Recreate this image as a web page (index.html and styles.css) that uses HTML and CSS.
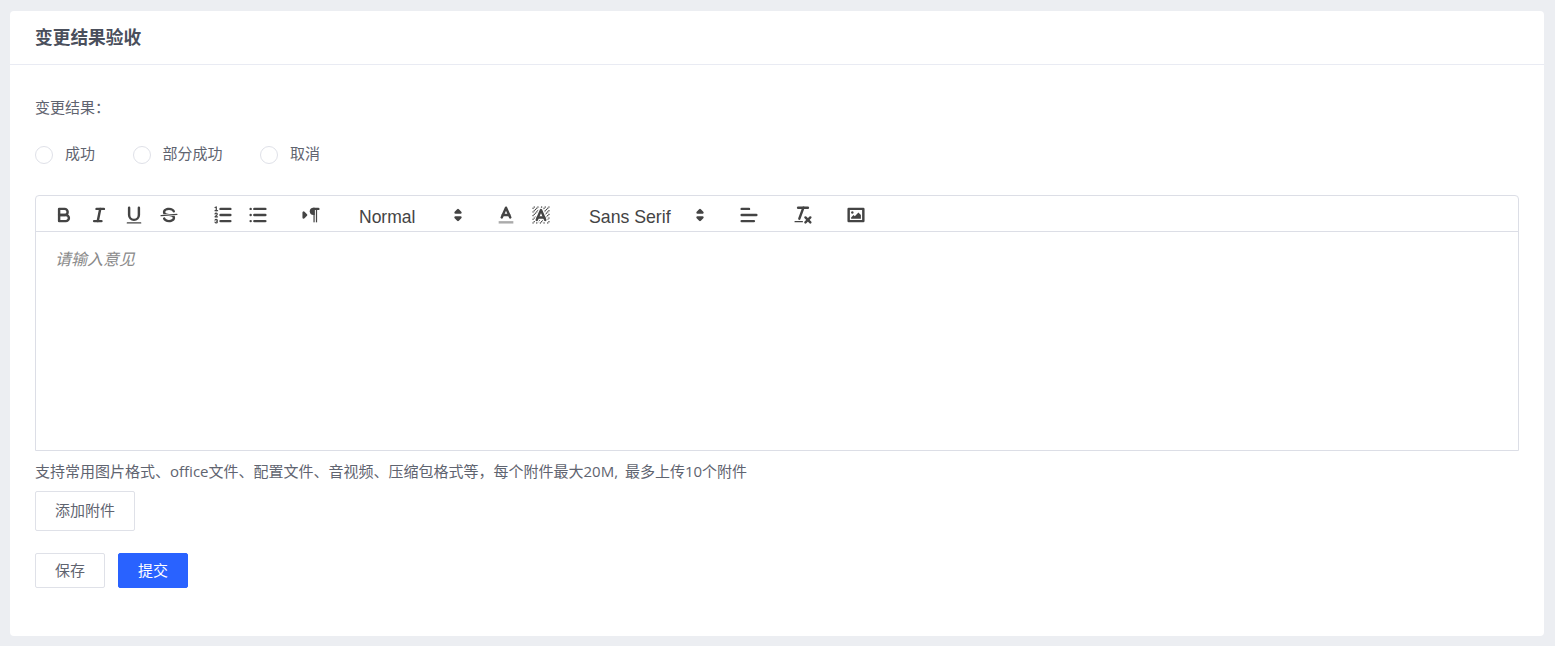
FILE: index.html
```html
<!DOCTYPE html>
<html lang="zh-CN">
<head>
<meta charset="utf-8">
<title>变更结果验收</title>
<link rel="stylesheet" href="styles.css">
</head>
<body>
<main class="card">
  <header class="card-head"><h1 class="card-title">变更结果验收</h1></header>
  <div class="card-body">
    <div class="field-label">变更结果&#xFF1A;</div>
    <div class="radios">
      <label class="radio"><span class="radio-dot"></span><span class="radio-text">成功</span></label>
      <label class="radio"><span class="radio-dot"></span><span class="radio-text">部分成功</span></label>
      <label class="radio"><span class="radio-dot"></span><span class="radio-text">取消</span></label>
    </div>
    <div class="editor">
      <div class="toolbar">
        <span class="group">
          <span class="tb"><svg viewBox="0 0 18 18"><path class="st" d="M5,4H9.5A2.5,2.5,0,0,1,12,6.5v0A2.5,2.5,0,0,1,9.5,9H5A0,0,0,0,1,5,9V4A0,0,0,0,1,5,4Z"/><path class="st" d="M5,9h5.5A2.5,2.5,0,0,1,13,11.5v0A2.5,2.5,0,0,1,10.5,14H5a0,0,0,0,1,0,0V9A0,0,0,0,1,5,9Z"/></svg></span>
          <span class="tb"><svg viewBox="0 0 18 18"><line class="st" x1="7" x2="13" y1="4" y2="4"/><line class="st" x1="5" x2="11" y1="14" y2="14"/><line class="st" x1="8" x2="10" y1="14" y2="4"/></svg></span>
          <span class="tb"><svg viewBox="0 0 18 18"><path class="st" d="M5,3V9a4.012,4.012,0,0,0,4,4H9a4.012,4.012,0,0,0,4-4V3"/><rect class="fl" height="1" rx="0.5" ry="0.5" width="12" x="3" y="15"/></svg></span>
          <span class="tb"><svg viewBox="0 0 18 18"><line class="st thin" x1="15.5" x2="2.5" y1="8.5" y2="9.5"/><path class="fl" d="M9.007,8C6.542,7.791,6,7.519,6,6.5,6,5.792,7.283,5,9,5c1.571,0,2.765.679,2.969,1.309a1,1,0,0,0,1.9-.617C13.356,4.106,11.354,3,9,3,6.2,3,4,4.538,4,6.5a3.2,3.2,0,0,0,.5,1.843Z"/><path class="fl" d="M8.984,10C11.457,10.208,12,10.479,12,11.5c0,.708-1.283,1.5-3,1.5-1.571,0-2.765-.679-2.969-1.309a1,1,0,1,0-1.9.617C4.644,13.894,6.646,15,9,15c2.8,0,5-1.538,5-3.5a3.2,3.2,0,0,0-.5-1.843Z"/></svg></span>
        </span>
        <span class="group">
          <span class="tb"><svg viewBox="0 0 18 18"><line class="st" x1="7" x2="15" y1="4" y2="4"/><line class="st" x1="7" x2="15" y1="9" y2="9"/><line class="st" x1="7" x2="15" y1="14" y2="14"/><line class="st thin" x1="2.5" x2="4.5" y1="5.5" y2="5.5"/><path class="fl" d="M3.5,6A0.5,0.5,0,0,1,3,5.5V3.085l-0.276.138A0.5,0.5,0,0,1,2.053,3c-0.124-.247-0.023-0.324.224-0.447l1-.5A0.5,0.5,0,0,1,4,2.5v3A0.5,0.5,0,0,1,3.5,6Z"/><path class="st thin" d="M4.5,10.5h-2c0-.234,1.85-1.076,1.85-2.234A0.959,0.959,0,0,0,2.5,8.156"/><path class="st thin" d="M2.5,14.846a0.959,0.959,0,0,0,1.85-.109A0.7,0.7,0,0,0,3.75,14a0.688,0.688,0,0,0,.6-0.736,0.959,0.959,0,0,0-1.85-.109"/></svg></span>
          <span class="tb"><svg viewBox="0 0 18 18"><line class="st" x1="6" x2="15" y1="4" y2="4"/><line class="st" x1="6" x2="15" y1="9" y2="9"/><line class="st" x1="6" x2="15" y1="14" y2="14"/><line class="st" x1="3" x2="3" y1="4" y2="4"/><line class="st" x1="3" x2="3" y1="9" y2="9"/><line class="st" x1="3" x2="3" y1="14" y2="14"/></svg></span>
        </span>
        <span class="group">
          <span class="tb"><svg viewBox="0 0 18 18"><polygon class="st fl" points="3 11 5 9 3 7 3 11"/><line class="st fl" x1="15" x2="11" y1="4" y2="4"/><path class="fl" d="M11,3a3,3,0,0,0,0,6h1V3H11Z"/><rect class="fl" height="11" width="1" x="11" y="4"/><rect class="fl" height="11" width="1" x="13" y="4"/></svg></span>
        </span>
        <span class="picker picker-size"><span class="picker-text">Normal</span><svg viewBox="0 0 18 18"><polygon class="st fl" points="7 11 9 13 11 11 7 11"/><polygon class="st fl" points="7 7 9 5 11 7 7 7"/></svg></span>
        <span class="group">
          <span class="tb"><svg viewBox="0 0 18 18"><line class="st faint" x1="3" x2="15" y1="15" y2="15"/><polyline class="st" points="5.5 11 9 3 12.5 11"/><line class="st" x1="11.63" x2="6.38" y1="9" y2="9"/></svg></span>
          <span class="tb"><svg viewBox="0 0 18 18"><g class="fl"><polygon points="6 6.868 6 6 5 6 5 7 5.942 7 6 6.868"/><rect height="1" width="1" x="4" y="4"/><polygon points="6.817 5 6 5 6 6 6.38 6 6.817 5"/><rect height="1" width="1" x="2" y="6"/><rect height="1" width="1" x="3" y="5"/><rect height="1" width="1" x="4" y="7"/><polygon points="4 11.439 4 11 3 11 3 12 3.755 12 4 11.439"/><rect height="1" width="1" x="2" y="12"/><rect height="1" width="1" x="2" y="9"/><rect height="1" width="1" x="2" y="15"/><polygon points="4.63 10 4 10 4 11 4.192 11 4.63 10"/><rect height="1" width="1" x="3" y="8"/><path d="M10.832,4.2L11,4.582V4H10.708A1.948,1.948,0,0,1,10.832,4.2Z"/><path d="M7,4.582L7.168,4.2A1.929,1.929,0,0,1,7.292,4H7V4.582Z"/><path d="M8,13H7.683l-0.351.8a1.933,1.933,0,0,1-.124.2H8V13Z"/><rect height="1" width="1" x="12" y="2"/><rect height="1" width="1" x="11" y="3"/><path d="M9,3H8V3.282A1.985,1.985,0,0,1,9,3Z"/><rect height="1" width="1" x="2" y="3"/><rect height="1" width="1" x="6" y="2"/><rect height="1" width="1" x="3" y="2"/><rect height="1" width="1" x="5" y="3"/><rect height="1" width="1" x="9" y="2"/><rect height="1" width="1" x="15" y="14"/><polygon points="13.447 10.174 13.469 10.225 13.472 10.232 13.808 11 14 11 14 10 13.37 10 13.447 10.174"/><rect height="1" width="1" x="13" y="7"/><rect height="1" width="1" x="15" y="5"/><rect height="1" width="1" x="14" y="6"/><rect height="1" width="1" x="15" y="8"/><rect height="1" width="1" x="14" y="9"/><path d="M3.775,14H3v1H4V14.314A1.97,1.97,0,0,1,3.775,14Z"/><rect height="1" width="1" x="14" y="3"/><polygon points="12 6.868 12 6 11.62 6 12 6.868"/><rect height="1" width="1" x="15" y="2"/><rect height="1" width="1" x="12" y="5"/><rect height="1" width="1" x="13" y="4"/><polygon points="12.933 9 13 9 13 8 12.495 8 12.933 9"/><rect height="1" width="1" x="9" y="14"/><rect height="1" width="1" x="8" y="15"/><path d="M6,14.926V15H7V14.316A1.993,1.993,0,0,1,6,14.926Z"/><rect height="1" width="1" x="5" y="15"/><path d="M10.668,13.8L10.317,13H10v1h0.792A1.947,1.947,0,0,1,10.668,13.8Z"/><rect height="1" width="1" x="11" y="15"/><path d="M14.332,12.2a1.99,1.99,0,0,1,.166.8H15V12H14.245Z"/><rect height="1" width="1" x="14" y="15"/><rect height="1" width="1" x="15" y="11"/></g><polyline class="st" points="5.5 13 9 5 12.5 13"/><line class="st" x1="11.63" x2="6.38" y1="11" y2="11"/></svg></span>
        </span>
        <span class="picker picker-font"><span class="picker-text">Sans Serif</span><svg viewBox="0 0 18 18"><polygon class="st fl" points="7 11 9 13 11 11 7 11"/><polygon class="st fl" points="7 7 9 5 11 7 7 7"/></svg></span>
        <span class="group">
          <span class="tb"><svg viewBox="0 0 18 18"><line class="st" x1="3" x2="15" y1="9" y2="9"/><line class="st" x1="3" x2="13" y1="14" y2="14"/><line class="st" x1="3" x2="9" y1="4" y2="4"/></svg></span>
        </span>
        <span class="group">
          <span class="tb"><svg viewBox="0 0 18 18"><line class="st" x1="5" x2="13" y1="3" y2="3"/><line class="st" x1="6" x2="9.35" y1="12" y2="3"/><line class="st" x1="11" x2="15" y1="11" y2="15"/><line class="st" x1="15" x2="11" y1="11" y2="15"/><rect class="fl" height="1" rx="0.5" ry="0.5" width="7" x="2" y="14"/></svg></span>
        </span>
        <span class="group">
          <span class="tb"><svg viewBox="0 0 18 18"><rect class="st" height="10" width="12" x="3" y="4"/><circle class="fl" cx="6" cy="7" r="1"/><polyline class="fl" points="5 12 5 11 7 9 8 10 11 7 13 9 13 12 5 12"/></svg></span>
        </span>
      </div>
      <div class="editor-area"><span class="placeholder">请输入意见</span></div>
    </div>
    <p class="hint">支持常用图片格式、office文件、配置文件、音视频、压缩包格式等&#xFF0C;每个附件最大20M, 最多上传10个附件</p>
    <button class="btn btn-attach" type="button">添加附件</button>
    <div class="actions">
      <button class="btn btn-action" type="button">保存</button>
      <button class="btn btn-action btn-primary" type="button">提交</button>
    </div>
  </div>
</main>
</body>
</html>
```
FILE: styles.css
```css
* { box-sizing: border-box; }
html, body { height: 100%; }
body {
  margin: 0;
  padding: 11px 11px 10px 10px;
  background: #eceef2;
  color: #5f6470;
  font-family: "Open Sans", "Noto Sans CJK SC", "Liberation Sans", sans-serif;
  font-size: 15px;
  overflow: hidden;
}
.card {
  height: 625px;
  background: #fff;
  border-radius: 4px;
}
.card-head {
  height: 54px;
  padding: 0 25px 1px;
  display: flex;
  align-items: center;
  border-bottom: 1px solid #e9ebf3;
}
.card-title {
  margin: 0;
  font-size: 17.7px;
  font-weight: 700;
  line-height: 26px;
  color: #4a4f5c;
}
.card-body { padding: 31px 25px 0; }
.field-label { line-height: 22px; height: 24px; }
.radios {
  display: flex;
  gap: 37.5px;
  margin-top: 23px;
  height: 24px;
  align-items: center;
}
.radio { display: flex; align-items: center; gap: 12px; }
.radio-text { padding-bottom: 4px; line-height: 22px; }
.radio-dot {
  width: 18px;
  height: 18px;
  border: 1px solid #dfe1e8;
  border-radius: 50%;
  background: #fff;
}
.editor {
  margin-top: 28px;
  height: 256px;
  border: 1px solid #dcdee6;
  border-radius: 4px 4px 0 0;
  display: flex;
  flex-direction: column;
}
.toolbar {
  height: 36px;
  flex: none;
  display: flex;
  align-items: center;
  padding: 2px 0 0 10.5px;
  border-bottom: 1px solid #dcdee6;
}
.group { display: flex; margin-right: 18.5px; flex: none; }
.tb {
  width: 35px;
  height: 24px;
  display: flex;
  align-items: center;
  justify-content: center;
}
.tb svg { width: 22px; height: 22px; display: block; flex: none; }
.st {
  fill: none;
  stroke: #444;
  stroke-width: 2;
  stroke-linecap: round;
  stroke-linejoin: round;
}
.thin { stroke-width: 1; }
.fl { fill: #444; }
.faint { stroke: #444; opacity: .45; stroke-linecap: butt; }
.picker {
  display: flex;
  flex: none;
  align-items: center;
  justify-content: space-between;
  padding-left: 8px;
  margin: 0 21.5px 0 4px;
  height: 24px;
  font-family: "Liberation Sans", sans-serif;
  color: #444;
}
.picker svg { width: 22px; height: 22px; margin-right: -2px; flex: none; }
.picker-text { line-height: 24px; padding-top: 5px; }
.picker-size { width: 116px; font-size: 17.5px; }
.picker-font { width: 128px; font-size: 17.7px; margin-right: 22.5px; }
.editor-area {
  flex: 1;
  padding: 12px 19px;
  font-size: 16px;
  line-height: 30px;
}
.placeholder { font-style: italic; color: #8a8a8a; }
.hint {
  margin: 0;
  height: 40px;
  line-height: 40px;
  white-space: nowrap;
  word-spacing: 3px;
}
.btn {
  font: inherit;
  color: #5f6470;
  background: #fff;
  border: 1px solid #dfe1e8;
  border-radius: 2px;
  padding: 0 0 3px;
}
.btn-attach { display: block; width: 100px; height: 40px; }
.actions { display: flex; gap: 13px; margin-top: 22px; }
.btn-action { width: 70px; height: 35px; }
.btn-primary { background: #2962ff; border-color: #2962ff; color: #fff; }
```
